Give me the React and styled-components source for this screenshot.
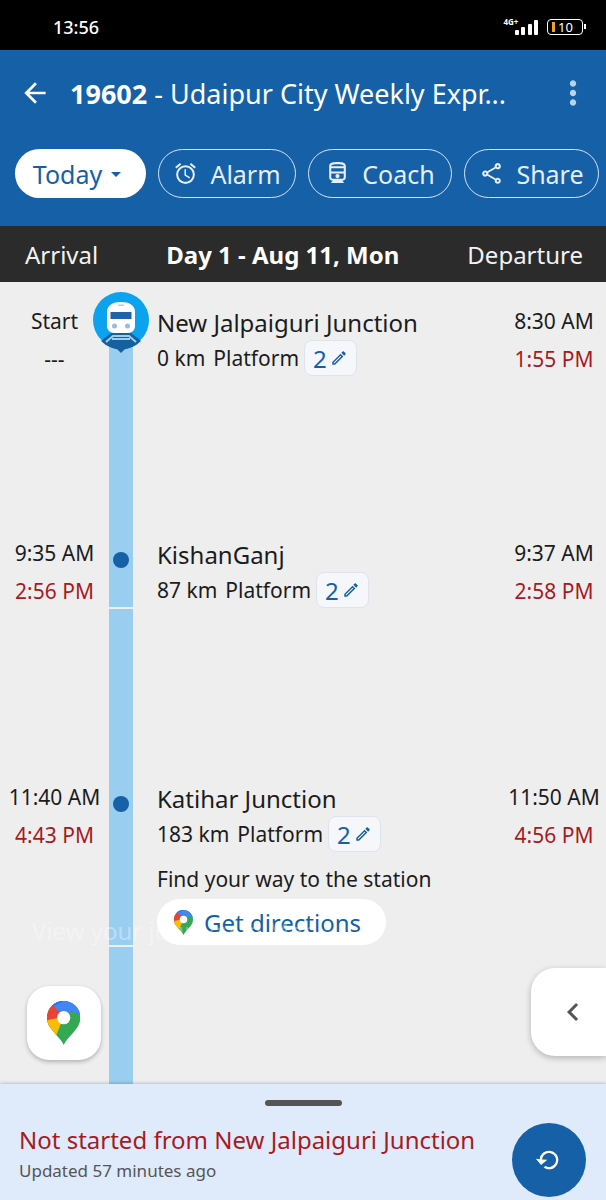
import styled, { createGlobalStyle } from "styled-components";
import { MdArrowBack, MdOutlineAlarm, MdOutlineDirectionsRailway, MdOutlineShare, MdArrowDropDown, MdMoreVert, MdOutlineEdit, MdChevronLeft, MdRefresh } from "react-icons/md";

const BLUE = "#1560a7";
const RED = "#a81a1e";
const FONT = `"Noto Sans", "Open Sans", sans-serif`;

const stations = [
  { name: "New Jalpaiguri Junction", km: 0, arrival: "Start", arrivalLive: "---", departure: "8:30 AM", departureLive: "1:55 PM", height: 232, breakAt: null },
  { name: "KishanGanj", km: 87, arrival: "9:35 AM", arrivalLive: "2:56 PM", departure: "9:37 AM", departureLive: "2:58 PM", height: 244, breakAt: 93 },
  { name: "Katihar Junction", km: 183, arrival: "11:40 AM", arrivalLive: "4:43 PM", departure: "11:50 AM", departureLive: "4:56 PM", breakAt: 187, directions: true },
];

function MapPin({ size }) {
  return (
    <svg width={size * 0.76} height={size} viewBox="0 0 38 50">
      <defs>
        <clipPath id="pin-shape">
          <path d="M19 0C8.5 0 0 8.4 0 18.8 0 26 3.6 30.6 8 35.800c4.400 5 8.800 9 11 14.200 2.200-5.200 6.600-9.200 11-14.200C34.400 30.600 38 26 38 18.800 38 8.400 29.500 0 19 0z" />
        </clipPath>
      </defs>
      <g clipPath="url(#pin-shape)">
        <rect width="38" height="50" fill="#34a853" />
        <polygon points="0,0 38,0 38,15 27,12 19,18 6,6" fill="#4285f4" />
        <polygon points="0,0 19,0 6,6" fill="#1a73e8" />
        <polygon points="0,4 7,5 19,18 0,32" fill="#ea4335" />
        <polygon points="0,22 19,18 10,40 0,40" fill="#fbbc04" />
      </g>
      <circle cx="19" cy="19" r="7.500" fill="#fff" />
    </svg>
  );
}

function TrainBadge() {
  return (
    <svg width="56" height="62" viewBox="0 0 56 62">
      <circle cx="28" cy="28" r="28" fill="#0ba2ee" />
      <path d="M21 54h14l-7 7z" fill="#15609f" />
      <path d="M8 49 18 41h20l10 8a28 28 0 0 1-40 0z" fill="#15609f" />
      <path d="M13 50 20 44h16l7 6" fill="none" stroke="#9ccdf3" strokeWidth="2" />
      <path d="M19 47h18" stroke="#9ccdf3" strokeWidth="2" />
      <path d="M14 20c0-7 6-10 14-10s14 3 14 10v14c0 4-3 7-7 7H21c-4 0-7-3-7-7z" fill="#fff" />
      <rect x="17.500" y="20" width="21" height="7" fill="#1f63ab" />
      <circle cx="21.500" cy="34" r="2.500" fill="#9ab9e6" />
      <circle cx="34.500" cy="34" r="2.500" fill="#9ab9e6" />
      <rect x="25" y="12.500" width="6" height="1.500" fill="#b9c8de" />
    </svg>
  );
}

function App() {
  return (
    <Page>
      <GlobalStyle />
      <StatusBar>
        <Clock>13:56</Clock>
        <StatusIcons>
          <Network>4G+</Network>
          <Signal>
            {[5, 8, 11, 15].map((h) => (
              <SignalBar key={h} $h={h} />
            ))}
          </Signal>
          <Battery>
            <BatteryLevel />
            10
          </Battery>
        </StatusIcons>
      </StatusBar>

      <Header>
        <TitleRow>
          <MdArrowBack size={32} color="#fff" />
          <Title>
            <b>19602</b> - Udaipur City Weekly Expr...
          </Title>
          <MoreButton>
            <MdMoreVert size={38} color="#b9d3ee" />
          </MoreButton>
        </TitleRow>
        <ChipRow>
          <DateChip>
            Today
            <MdArrowDropDown size={24} />
          </DateChip>
          <Chip $width={138}>
            <MdOutlineAlarm size={25} />
            Alarm
          </Chip>
          <Chip $width={144}>
            <MdOutlineDirectionsRailway size={25} />
            Coach
          </Chip>
          <Chip $width={135}>
            <MdOutlineShare size={25} />
            Share
          </Chip>
        </ChipRow>
      </Header>

      <DayBar>
        <span>Arrival</span>
        <DayLabel>Day 1 - Aug 11, Mon</DayLabel>
        <span>Departure</span>
      </DayBar>

      <Timeline>
        {stations.map((s, i) => (
          <Row key={s.name} $height={s.height}>
            <TimeColumn>
              <Time>{s.arrival}</Time>
              <LiveTime $muted={i === 0}>{s.arrivalLive}</LiveTime>
            </TimeColumn>
            <Rail>
              {i === 0 ? (
                <>
                  <RailBadge>
                    <TrainBadge />
                  </RailBadge>
                  <RailSegment $top={40} $grow />
                </>
              ) : (
                <>
                  <RailDot />
                  <RailSegment $height={s.breakAt} />
                  <RailSegment $grow />
                </>
              )}
            </Rail>
            <StationInfo>
              <StationName>{s.name}</StationName>
              <StationMeta>
                <span>{s.km} km</span>
                <span>Platform</span>
                <PlatformChip>
                  2
                  <MdOutlineEdit size={18} />
                </PlatformChip>
              </StationMeta>
              {s.directions && (
                <>
                  <DirectionsHint>Find your way to the station</DirectionsHint>
                  <DirectionsButton>
                    <MapPin size={25} />
                    Get directions
                  </DirectionsButton>
                </>
              )}
            </StationInfo>
            <TimeColumn>
              <Time>{s.departure}</Time>
              <LiveTime>{s.departureLive}</LiveTime>
            </TimeColumn>
          </Row>
        ))}

        <FadingHint>View your journey in Map</FadingHint>
        <MapButton>
          <MapPin size={44} />
        </MapButton>
        <DrawerTab>
          <MdChevronLeft size={36} color="#555" />
        </DrawerTab>
      </Timeline>

      <StatusPanel>
        <Handle />
        <PanelBody>
          <div>
            <StatusMessage>Not started from New Jalpaiguri Junction</StatusMessage>
            <Updated>Updated 57 minutes ago</Updated>
          </div>
          <RefreshButton>
            <MdRefresh size={28} color="#fff" style={{ transform: "scaleX(-1) rotate(40deg)" }} />
          </RefreshButton>
        </PanelBody>
      </StatusPanel>
    </Page>
  );
}

const GlobalStyle = createGlobalStyle`
  * {
    box-sizing: border-box;
  }

  body {
    margin: 0;
    background-color: #eeeeee;
    font-family: ${FONT};
  }
`;

const Page = styled.div`
  display: flex;
  flex-direction: column;
  width: 606px;
  height: 1200px;
  overflow: hidden;
`;

const StatusBar = styled.div`
  display: flex;
  align-items: center;
  justify-content: space-between;
  flex: 0 0 50px;
  padding: 4px 23px 0 53px;
  background-color: #000;
  color: #fff;
`;

const Clock = styled.span`
  font-size: 18px;
  font-weight: 500;
`;

const StatusIcons = styled.div`
  display: flex;
  align-items: center;
  gap: 9px;
  position: relative;
  padding-left: 11px;
`;

const Network = styled.span`
  position: absolute;
  left: 0;
  top: -2px;
  font-size: 8px;
  font-weight: 700;
  line-height: 9px;
`;

const Signal = styled.div`
  display: flex;
  align-items: flex-end;
  gap: 2.500px;
  height: 15px;
`;

const SignalBar = styled.i`
  display: block;
  width: 4px;
  height: ${(p) => p.$h}px;
  border-radius: 1px;
  background-color: #fff;
`;

const Battery = styled.div`
  display: flex;
  align-items: center;
  gap: 3px;
  position: relative;
  width: 36px;
  height: 16px;
  padding-left: 4px;
  border: 1.500px solid #fff;
  border-radius: 4px;
  font-size: 13px;
  line-height: 1;

  &::after {
    content: "";
    position: absolute;
    right: -4px;
    top: 4px;
    width: 2px;
    height: 5px;
    background-color: #fff;
  }
`;

const BatteryLevel = styled.i`
  display: block;
  width: 3px;
  height: 10px;
  background-color: #f0a030;
`;

const Header = styled.header`
  flex: 0 0 176px;
  background-color: ${BLUE};
`;

const TitleRow = styled.div`
  display: flex;
  align-items: center;
  height: 86px;
  padding: 0 14px 0 19px;
`;

const Title = styled.h1`
  flex: 1;
  margin: 0 0 0 19px;
  font-size: 27px;
  font-weight: 400;
  color: #fff;
  white-space: nowrap;

  b {
    font-weight: 700;
  }
`;

const MoreButton = styled.div`
  display: flex;
`;

const ChipRow = styled.div`
  display: flex;
  gap: 12px;
  margin-top: 13px;
  padding-left: 15px;
`;

const DateChip = styled.div`
  display: flex;
  align-items: center;
  justify-content: center;
  gap: 2px;
  width: 131px;
  height: 49px;
  border-radius: 25px;
  background-color: #fff;
  color: ${BLUE};
  font-size: 25px;
`;

const Chip = styled.div`
  display: flex;
  align-items: center;
  justify-content: center;
  gap: 12px;
  flex: 0 0 ${(p) => p.$width}px;
  height: 49px;
  border: 1.500px solid #d6e4f2;
  border-radius: 25px;
  color: #e6eff8;
  font-size: 25px;
`;

const DayBar = styled.div`
  display: flex;
  align-items: center;
  justify-content: space-between;
  flex: 0 0 56px;
  padding: 0 23px 0 25px;
  background-color: #2b2b2b;
  color: #f2f2f2;
  font-size: 24px;
`;

const DayLabel = styled.span`
  font-weight: 700;
  color: #fff;
`;

const Timeline = styled.main`
  position: relative;
  flex: 1;
  overflow: hidden;
  background-color: #eeeeee;
`;

const Row = styled.section`
  display: grid;
  grid-template-columns: 109px 24px 1fr 104px;
  height: ${(p) => (p.$height ? `${p.$height}px` : "340px")};
  color: #1c1c1c;
`;

const TimeColumn = styled.div`
  display: flex;
  flex-direction: column;
  align-items: center;
  gap: 9px;
  padding-top: 25px;
  font-size: 21px;
  white-space: nowrap;
`;

const Time = styled.span`
  line-height: 29px;
`;

const LiveTime = styled.span`
  line-height: 29px;
  color: ${(p) => (p.$muted ? "#1c1c1c" : RED)};
`;

const Rail = styled.div`
  position: relative;
  display: flex;
  flex-direction: column;
  gap: 2px;
`;

const RailSegment = styled.div`
  flex: ${(p) => (p.$grow ? 1 : `0 0 ${p.$height}px`)};
  margin-top: ${(p) => p.$top || 0}px;
  background-color: #99cef0;
`;

const RailBadge = styled.div`
  position: absolute;
  left: -16px;
  top: 10px;
  z-index: 1;
`;

const RailDot = styled.i`
  position: absolute;
  left: 4px;
  top: 38px;
  width: 16px;
  height: 16px;
  border-radius: 50%;
  background-color: ${BLUE};
`;

const StationInfo = styled.div`
  padding: 24px 0 0 24px;
`;

const StationName = styled.div`
  font-size: 24px;
  line-height: 33px;
  white-space: nowrap;
`;

const StationMeta = styled.div`
  display: flex;
  align-items: center;
  gap: 8px;
  margin-top: 1px;
  font-size: 21px;
  white-space: nowrap;
`;

const PlatformChip = styled.div`
  display: flex;
  align-items: center;
  gap: 3px;
  height: 36px;
  margin-left: -3px;
  padding: 0 8px;
  border: 1.500px solid #dfe3ea;
  border-radius: 8px;
  background-color: #f5f7fb;
  color: ${BLUE};
  font-size: 24px;
`;

const DirectionsHint = styled.div`
  margin-top: 12px;
  font-size: 21px;
  line-height: 30px;
  white-space: nowrap;
`;

const DirectionsButton = styled.div`
  display: flex;
  align-items: center;
  gap: 11px;
  width: 229px;
  height: 46px;
  margin-top: 5px;
  padding-left: 17px;
  border-radius: 23px;
  background-color: #fff;
  color: ${BLUE};
  font-size: 24px;
`;

const FadingHint = styled.div`
  position: absolute;
  left: 32px;
  top: 632px;
  color: rgba(255, 255, 255, 0.35);
  font-size: 24px;
  white-space: nowrap;
`;

const MapButton = styled.div`
  position: absolute;
  left: 27px;
  top: 704px;
  display: flex;
  align-items: center;
  justify-content: center;
  width: 74px;
  height: 74px;
  border-radius: 22px;
  background-color: #fff;
  box-shadow: 0 2px 4px rgba(0, 0, 0, 0.25);
`;

const DrawerTab = styled.div`
  position: absolute;
  right: 0;
  top: 686px;
  display: flex;
  align-items: center;
  padding-left: 24px;
  width: 75px;
  height: 88px;
  border-radius: 24px 0 0 24px;
  background-color: #fff;
  box-shadow: 0 2px 6px rgba(0, 0, 0, 0.25);
`;

const StatusPanel = styled.footer`
  position: relative;
  flex: 0 0 116px;
  background-color: #dfeafb;
  box-shadow: 0 -1px 3px rgba(0, 0, 0, 0.2);
`;

const Handle = styled.div`
  width: 77px;
  height: 6px;
  margin: 16px auto 0;
  border-radius: 3px;
  background-color: #555;
`;

const PanelBody = styled.div`
  display: flex;
  justify-content: space-between;
  padding: 17px 20px 0 19px;
`;

const StatusMessage = styled.div`
  color: ${RED};
  font-size: 24px;
  line-height: 34px;
  white-space: nowrap;
`;

const Updated = styled.div`
  margin-top: 2px;
  color: #555;
  font-size: 17px;
`;

const RefreshButton = styled.div`
  display: flex;
  align-items: center;
  justify-content: center;
  width: 74px;
  height: 74px;
  margin-top: 0;
  border-radius: 50%;
  background-color: ${BLUE};
`;

export default App;
